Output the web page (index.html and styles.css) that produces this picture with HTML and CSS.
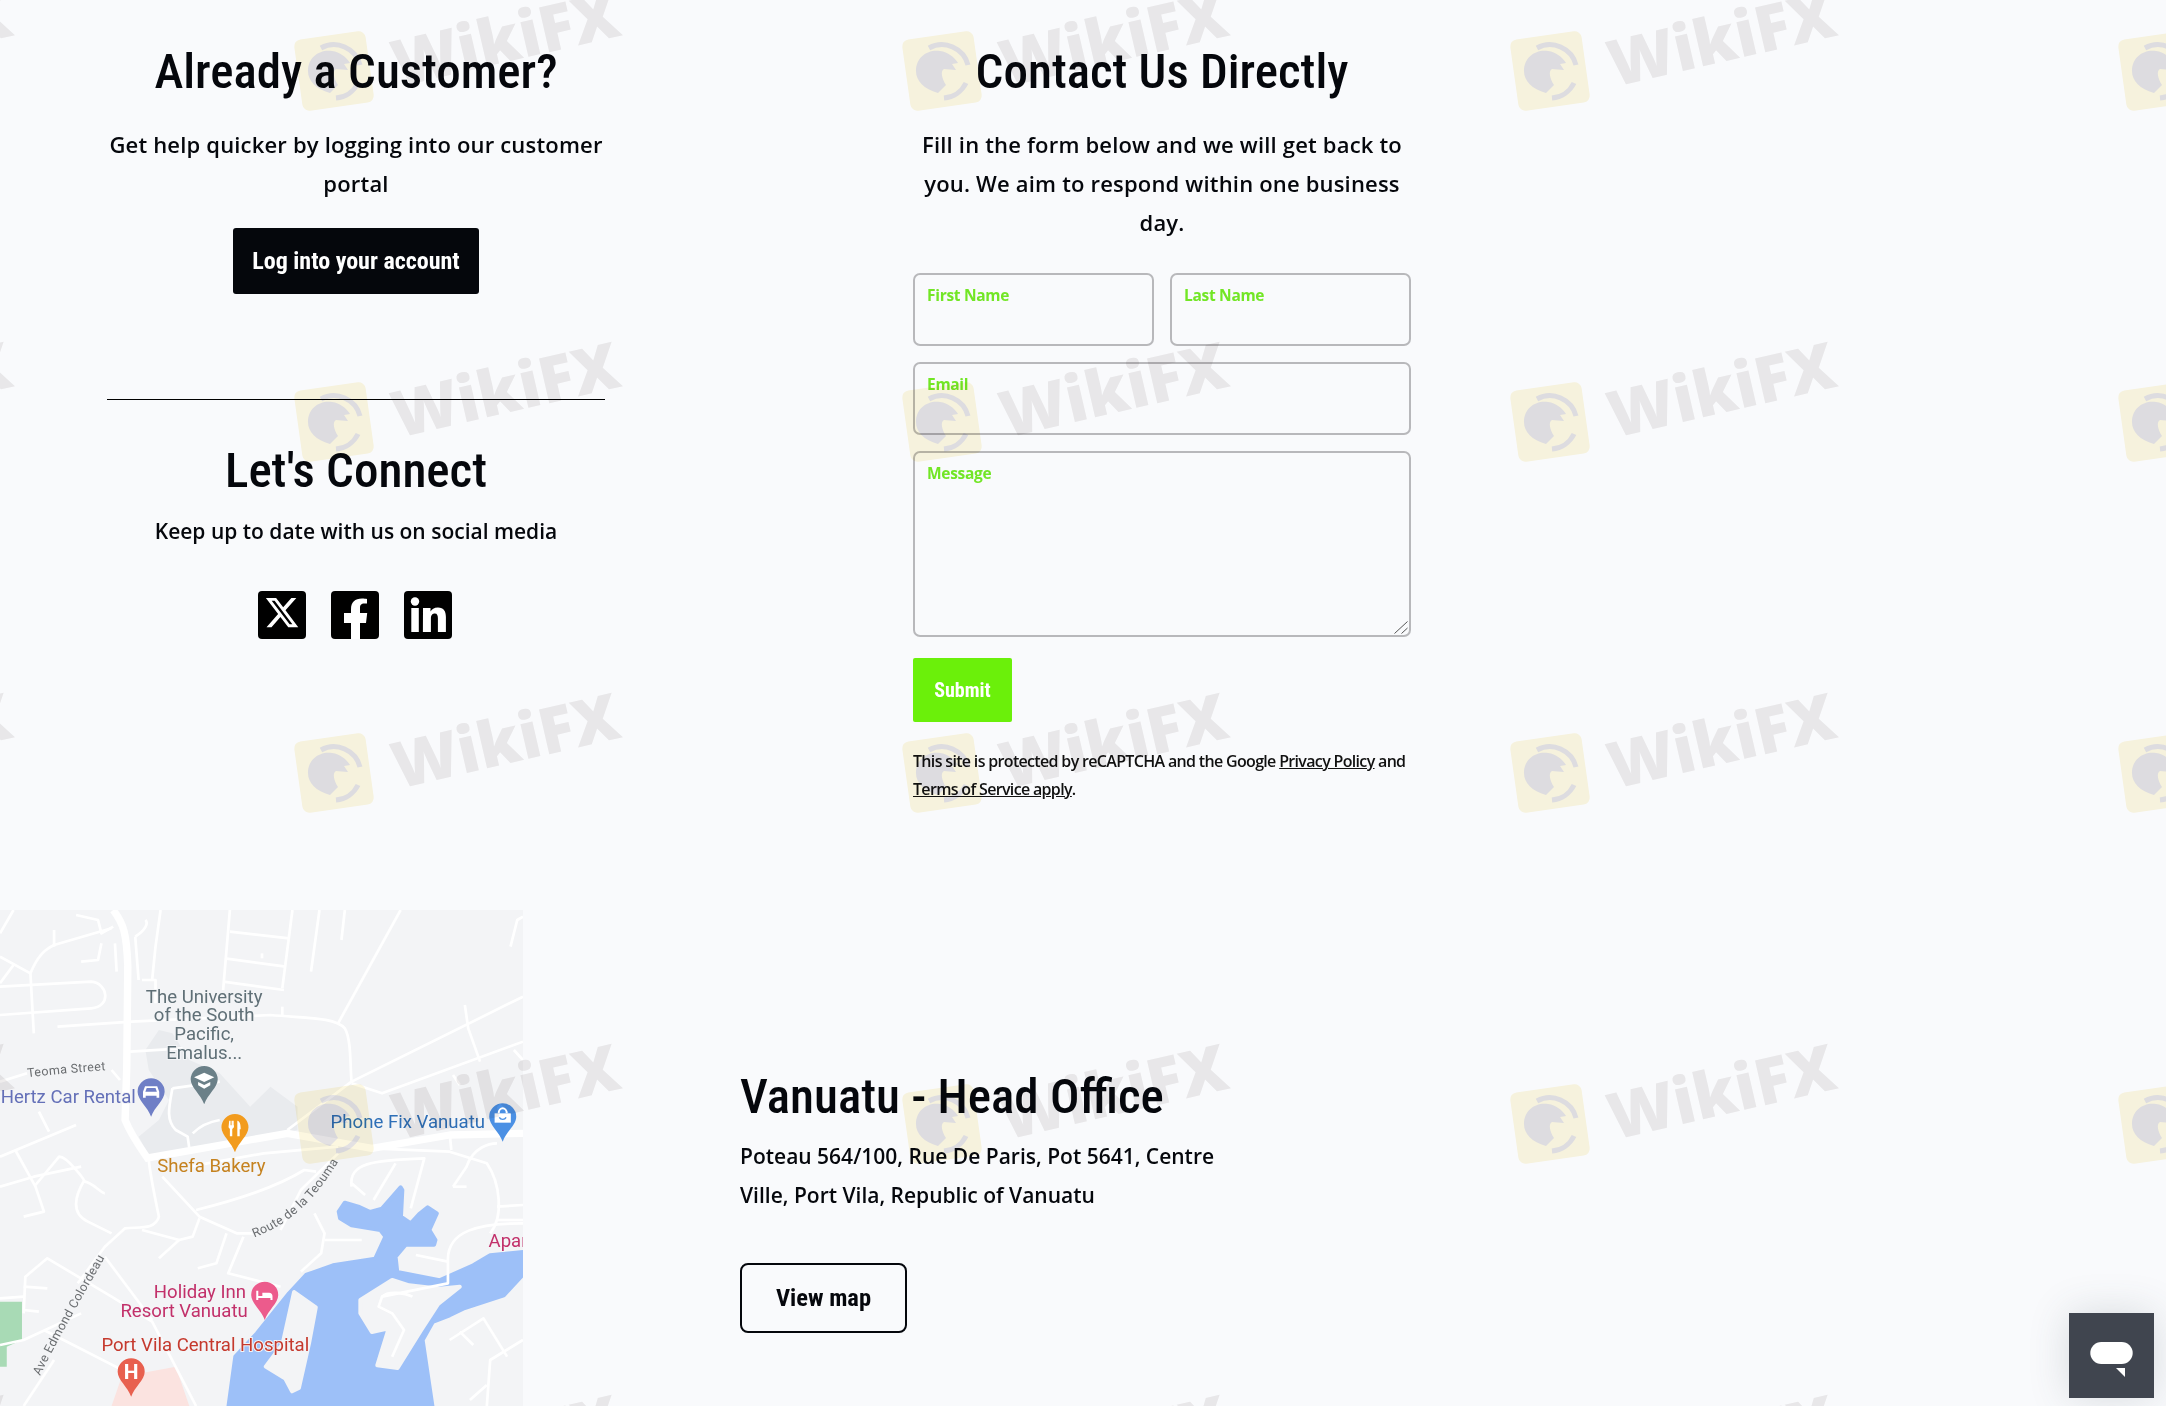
FILE: index.html
```html
<!DOCTYPE html>
<html lang="en">
<head>
    <meta charset="UTF-8">
    <meta name="viewport" content="width=device-width, initial-scale=1.0">
    <title>Contact Us</title>
    <link rel="stylesheet" href="styles.css">
</head>
<body>
    <div class="contact">
        <div class="contact-side">
            <h2>Already a Customer?</h2>
            <p class="lead">Get help quicker by logging into our customer portal</p>
            <a class="btn-login" href="#">Log into your account</a>
            <hr class="divider">
            <h2>Let's Connect</h2>
            <p class="lead-small">Keep up to date with us on social media</p>
            <div class="social">
                <a href="#" aria-label="X">
                    <svg viewBox="0 0 48 48" width="48" height="48">
                        <rect width="48" height="48" rx="4" fill="#000"/>
                        <path transform="translate(6 3.6) scale(1.5)" fill="#fff" d="M18.244 2.25h3.308l-7.227 8.26 8.502 11.24H16.17l-5.214-6.817L4.99 21.75H1.68l7.73-8.835L1.254 2.25H8.08l4.713 6.231zm-1.161 17.52h1.833L7.084 4.126H5.117z"/>
                    </svg>
                </a>
                <a href="#" aria-label="Facebook">
                    <svg viewBox="0 0 48 48" width="48" height="48">
                        <rect width="48" height="48" rx="4" fill="#000"/>
                        <path fill="#fff" d="M29 48V32h6l1.2-10H29v-5c0-3 1-4.5 4.5-4.500H36V8c-1-.2-3-.4-5-.4-7 0-11 3.600-11 10.800V22h-7v10h7v16z"/>
                    </svg>
                </a>
                <a href="#" aria-label="LinkedIn">
                    <svg viewBox="0 0 48 48" width="48" height="48">
                        <rect width="48" height="48" rx="4" fill="#000"/>
                        <circle cx="11" cy="10.500" r="4.200" fill="#fff"/>
                        <path fill="#fff" d="M7.300 17h7.500v24H7.300zM19 17h7.500v3.400c1.200-2 3.600-4 7.400-4 6 0 8 4 8 9.600V41h-8V27.500c0-3-.6-5-3-5-3 0-4 2.200-4 5V41h-8z"/>
                    </svg>
                </a>
            </div>
        </div>

        <div class="contact-main">
            <h2>Contact Us Directly</h2>
            <p class="lead lead-form">Fill in the form below and we will get back to you. We aim to respond within one business day.</p>
            <form class="form">
                <div class="form-row">
                    <div class="field">
                        <label for="first-name">First Name</label>
                        <input id="first-name" type="text">
                    </div>
                    <div class="field">
                        <label for="last-name">Last Name</label>
                        <input id="last-name" type="text">
                    </div>
                </div>
                <div class="field">
                    <label for="email">Email</label>
                    <input id="email" type="email">
                </div>
                <div class="field">
                    <label for="message">Message</label>
                    <textarea id="message"></textarea>
                    <svg class="grip" viewBox="0 0 14 13" width="14" height="13">
                        <path d="M0.500,12.500 L13.500,0.500 M7.500,12.500 L13.500,7"/>
                    </svg>
                </div>
                <button class="btn-submit" type="button">Submit</button>
            </form>
            <p class="recaptcha">This site is protected by reCAPTCHA and the Google <a href="#">Privacy Policy</a> and <a href="#">Terms of Service apply</a>.</p>
        </div>
    </div>

    <div class="office">
        <svg class="map" viewBox="0 30 1547 1488" preserveAspectRatio="none" width="523" height="496">
            <defs>
                <path id="pin" d="M-40,0 A40,40 0 1 1 40,0 C40,25 10,45 0,75 C-10,45 -40,25 -40,0Z"/>
                <path id="label-route" d="M752,1012 C840,978 925,920 1014,762"/>
                <path id="label-ave" d="M118,1428 C180,1300 250,1180 318,1058"/>
                <path id="label-teoma" d="M82,532 C160,522 240,516 322,510"/>
            </defs>
            <rect x="0" y="30" width="1547" height="1488" fill="#f3f4f6"/>
            <path fill="#e9ebee" d="M430,450 L470,390 L510,400 L560,480 L650,520 L740,620 L800,560 L880,620 L880,690 L560,760 L440,765 L410,710 L470,660 L500,600 L440,510Z"/>
            <path fill="#a8dab5" d="M0,1205 L65,1205 L65,1320 L20,1340 L20,1400 L0,1400Z"/>
            <path fill="#fbe3e0" d="M360,1430 L520,1400 L560,1518 L330,1518Z"/>
            <path class="water" d="M676,1518 L696,1370 L760,1300 L855,1180 L905,1125 L985,1096 L1110,1076 L1140,1010 L1125,990 L1040,976 L1006,955 L1002,935 L1020,908 L1060,920 L1095,936 L1130,926 L1185,862 L1190,870 L1186,950 L1215,970 L1240,942 L1265,922 L1292,940 L1270,990 L1288,1020 L1284,1034 L1200,1034 L1170,1070 L1175,1116 L1300,1141 L1400,1096 L1450,1066 L1547,1056 L1547,1124 L1490,1186 L1370,1226 L1330,1246 L1280,1266 L1250,1320 L1279,1518Z"/>
            <path class="land" d="M1160,1140 L1066,1200 L1066,1240 L1100,1296 L1150,1285 L1116,1396 L1176,1404 L1246,1290 L1296,1212 L1360,1160 L1300,1166 L1210,1156Z"/>
            <path class="land" d="M870,1176 L934,1222 L914,1330 L884,1464 L864,1474 L844,1436 L786,1400 L836,1332 L856,1240Z"/>

            <g class="roads-main">
                <path d="M335,30 C365,70 375,100 378,200 L375,500 L370,660 C390,710 420,750 440,780"/>
                <path d="M430,775 L850,700 L1100,745 L1330,705 L1547,700"/>
            </g>
            <g class="roads">
                <path d="M0,100 L40,30"/>
                <path d="M0,170 L90,220 L100,400"/>
                <path d="M0,250 L40,195"/>
                <path d="M90,220 C110,170 130,150 160,135 L330,85"/>
                <path d="M160,90 L160,140"/>
                <path d="M240,185 L290,180 L300,130"/>
                <path d="M225,45 L290,60 L300,100 L335,80"/>
                <path d="M340,130 L345,215"/>
                <path d="M400,110 L410,240"/>
                <path d="M430,60 C440,70 430,90 400,110"/>
                <path d="M475,30 L460,140 L450,240"/>
                <path d="M0,260 L270,245 C320,250 330,320 270,325 L0,345"/>
                <path d="M170,380 L390,365 L800,345 C900,355 990,350 1020,385 C1040,420 1035,500 1040,545"/>
                <path d="M420,240 L460,240 L460,310"/>
                <path d="M385,455 L540,445"/>
                <path d="M1000,370 L1185,30"/>
                <path d="M680,30 L660,270"/>
                <path d="M680,95 L855,115"/>
                <path d="M665,175 L845,200"/>
                <path d="M660,245 L840,270"/>
                <path d="M865,30 L835,265"/>
                <path d="M775,160 L775,175"/>
                <path d="M945,30 L920,215"/>
                <path d="M1020,30 L1010,120"/>
                <path d="M835,320 L835,350"/>
                <path d="M850,690 L1040,545 L1547,290"/>
                <path d="M1040,550 L1130,580 L1547,425"/>
                <path d="M1375,315 L1385,385 L1420,485"/>
                <path d="M1340,525 L1360,555"/>
                <path d="M1510,140 L1530,60 L1547,50"/>
                <path d="M1520,450 L1547,480"/>
                <path d="M510,565 L650,545"/>
                <path d="M510,565 C500,620 490,660 520,690 L555,710 L560,745"/>
                <path d="M570,700 C590,680 620,665 650,660"/>
                <path d="M0,545 L80,520"/>
                <path d="M330,510 L355,540"/>
                <path d="M0,770 L225,675"/>
                <path d="M115,635 L145,695"/>
                <path d="M45,750 L105,860 L130,935 L70,950"/>
                <path d="M0,860 L100,830 L240,800"/>
                <path d="M105,855 L175,770 C200,770 250,840 250,845 C270,845 300,880 310,880"/>
                <path d="M250,840 C220,890 210,940 260,965 L330,1000"/>
                <path d="M440,780 C445,830 460,900 470,950 C460,990 410,980 370,985 L310,1040 L230,1150"/>
                <path d="M480,830 L590,950 L700,1000 L770,1000"/>
                <path d="M580,930 C700,900 820,860 900,810 L935,815"/>
                <path d="M560,800 L780,760 L1000,740"/>
                <path d="M1000,760 L890,870 L830,990"/>
                <path d="M590,955 L570,1010 L530,1020 L470,1075"/>
                <path d="M420,990 L530,1020"/>
                <path d="M670,1000 L640,1090 L585,1105"/>
                <path d="M720,1010 L675,1120 L830,1160"/>
                <path d="M930,940 L960,1000 L950,1060 L890,1115"/>
                <path d="M960,1020 L1070,1020"/>
                <path d="M1330,700 L1335,750"/>
                <path d="M1100,745 L1330,755 L1440,790 C1480,850 1490,950 1450,1000"/>
                <path d="M1040,860 C1030,790 1100,780 1255,775 L1215,925"/>
                <path d="M1170,790 L1105,900"/>
                <path d="M1040,850 L1080,885"/>
                <path d="M1340,860 L1380,800 C1400,740 1450,730 1470,730"/>
                <path d="M1340,860 L1380,860"/>
                <path d="M1470,920 L1547,915"/>
                <path d="M1470,960 L1547,960"/>
                <path d="M1230,1065 L1325,1085 C1320,990 1420,970 1547,970"/>
                <path d="M1325,1085 L1325,1150 L1130,1190 L1120,1220 L1160,1240 L1195,1290 L1160,1370"/>
                <path d="M1130,1190 C1150,1170 1200,1180 1220,1190"/>
                <path d="M70,1190 L0,1195"/>
                <path d="M70,1240 L75,1130 L140,1075 L330,1190 L450,1265 L580,1518"/>
                <path d="M70,1160 L140,1165"/>
                <path d="M70,1230 L115,1235"/>
                <path d="M310,1070 L450,1260"/>
                <path d="M130,1290 L400,1430"/>
                <path d="M0,1335 L70,1320 L240,1240"/>
                <path d="M70,1518 L160,1380"/>
                <path d="M1330,1320 L1430,1255 L1500,1370"/>
                <path d="M1360,1295 L1400,1335"/>
                <path d="M1547,1320 L1450,1380 L1440,1518"/>
                <path d="M1390,1500 L1440,1455"/>
            </g>

            <use href="#pin" x="447" y="575" fill="#6f7fc6"/>
            <path fill="#fff" d="M423,575 l6,-16 h36 l6,16 v18 h-8 v-6 h-32 v6 h-8z M430,575 h34 l-4,-11 h-26z" fill-rule="evenodd"/>
            <use href="#pin" x="604" y="538" fill="#6b8088"/>
            <path fill="#fff" d="M574,532 L604,518 L634,532 L604,546Z M586,546 L604,555 L622,546 V556 L604,566 L586,556Z"/>
            <use href="#pin" x="695" y="682" fill="#f29b1d"/>
            <path fill="#fff" d="M678,662 h4 v14 h3 v-14 h4 v14 h1 v-14 h2 v20 l-5,5 v22 h-7 v-22 l-4,-5z M702,662 c8,2 10,12 10,26 h-3 v21 h-7z"/>
            <use href="#pin" x="1487" y="650" fill="#4b90e4"/>
            <path fill="#fff" d="M1463,640 h48 v28 h-48z"/>
            <path fill="none" stroke="#fff" stroke-width="6" d="M1475,640 c0,-20 24,-20 24,0"/>
            <path fill="none" stroke="#4b90e4" stroke-width="4" d="M1477,652 c4,8 16,8 20,0"/>
            <use href="#pin" x="783" y="1185" fill="#ec5b8c"/>
            <path fill="#fff" d="M758,1172 h6 v16 h12 v-10 h20 c6,0 10,4 10,10 v12 h-6 v-6 h-36 v6 h-6z"/>
            <use href="#pin" x="388" y="1415" fill="#e8604f"/>
            <text class="pin-letter" x="388" y="1438">H</text>

            <g class="map-labels">
                <text class="label-school" text-anchor="middle" x="604" y="308">The University</text>
                <text class="label-school" text-anchor="middle" x="604" y="363">of the South</text>
                <text class="label-school" text-anchor="middle" x="604" y="420">Pacific,</text>
                <text class="label-school" text-anchor="middle" x="604" y="477">Emalus...</text>
                <text class="label-street"><textPath href="#label-teoma">Teoma Street</textPath></text>
                <text class="label-street"><textPath href="#label-route">Route de la Teouma</textPath></text>
                <text class="label-street"><textPath href="#label-ave">Ave Edmond Colordeau</textPath></text>
                <text class="label-car" x="2" y="610">Hertz Car Rental</text>
                <text class="label-food" x="465" y="817">Shefa Bakery</text>
                <text class="label-shop" x="978" y="685">Phone Fix Vanuatu</text>
                <text class="label-hotel" text-anchor="end" x="728" y="1195">Holiday Inn</text>
                <text class="label-hotel" text-anchor="end" x="733" y="1250">Resort Vanuatu</text>
                <text class="label-hospital" x="300" y="1352">Port Vila Central Hospital</text>
                <text class="label-hotel" x="1445" y="1040">Apar</text>
            </g>
        </svg>
        <div class="office-info">
            <h2>Vanuatu - Head Office</h2>
            <p class="address">Poteau 564/100, Rue De Paris, Pot 5641, Centre Ville, Port Vila, Republic of Vanuatu</p>
            <a class="btn-map" href="#">View map</a>
        </div>
    </div>

    <!-- repeating site watermark -->
    <svg class="watermark" width="2166" height="1406">
        <defs>
            <pattern id="wm" x="284" y="-29" width="608" height="351" patternUnits="userSpaceOnUse">
                <rect x="14" y="64" width="72" height="72" rx="7" fill="#fcf7e0" transform="rotate(-8 50 100)"/>
                <path fill="none" stroke="#e3e1e3" stroke-width="5" d="M37,77 A27,27 0 0 1 76,94 M74,112 A27,27 0 0 1 52,127"/>
                <path fill="#e3e1e3" d="M24,100 C24,86 36,78 48,80 C56,81 62,86 66,92 L60,93 L64,99 L52,98 C48,100 50,108 54,114 L46,122 C32,118 24,110 24,100Z"/>
                <text class="wm-text" x="114" y="116" transform="rotate(-13 114 116)">WikiFX</text>
            </pattern>
        </defs>
        <rect width="2166" height="1406" fill="url(#wm)"/>
    </svg>

    <button class="chat" type="button" aria-label="Chat">
        <svg viewBox="0 0 85 85" width="85" height="85">
            <rect x="21.300" y="29" width="42.400" height="22" rx="11" fill="#fff"/>
            <polygon points="47,55 56,55 56,64" fill="#fff"/>
        </svg>
    </button>
</body>
</html>
```

FILE: styles.css
```css
/* General Styles */
html, body {
    margin: 0;
    padding: 0;
}

body {
    position: relative;
    width: 2166px;
    height: 1406px;
    overflow: hidden;
    background: #f9fafc;
    color: #05070c;
    font-family: 'Open Sans', sans-serif;
}

h2 {
    margin: 0;
    font-family: Roboto, sans-serif;
    font-size: 49px;
    font-stretch: 75%;
    font-weight: 500;
    line-height: 60px;
}

p {
    margin: 0;
}

/* Top section */
.contact {
    display: grid;
    grid-template-columns: 498px 498px;
    column-gap: 308px;
    padding: 42px 0 107px 107px;
}

.contact-side,
.contact-main {
    text-align: center;
}

.lead {
    margin-top: 23px;
    font-size: 22px;
    font-weight: 600;
    line-height: 39px;
    letter-spacing: 0.18px;
}

.lead-small {
    margin-top: 11px;
    font-size: 21px;
    font-weight: 600;
    line-height: 39px;
}

.btn-login {
    display: block;
    width: 246px;
    height: 66px;
    margin: 25px auto 0;
    border-radius: 3px;
    background: #05070c;
    color: #fff;
    font-family: Roboto, sans-serif;
    font-size: 24px;
    font-stretch: 75%;
    font-weight: 700;
    line-height: 66px;
    text-decoration: none;
}

.divider {
    height: 1px;
    margin: 105px 0 41px;
    border: 0;
    background: #000;
}

.social {
    display: flex;
    justify-content: center;
    gap: 25px;
    margin-top: 40px;
    padding-right: 2px;
}

.social a,
.social svg {
    display: block;
}

/* Form */
.form {
    display: flex;
    flex-direction: column;
    gap: 16px;
    margin-top: 31px;
    text-align: left;
}

.form-row {
    display: flex;
    gap: 16px;
}

.form-row .field {
    flex: 1;
}

.field {
    position: relative;
}

.field label {
    position: absolute;
    top: 12px;
    left: 14px;
    color: #72e625;
    font-size: 15.500px;
    font-weight: 700;
    line-height: 20px;
    letter-spacing: -0.3px;
}

.field input,
.field textarea {
    display: block;
    box-sizing: border-box;
    width: 100%;
    border: 2px solid #b8b8bb;
    border-radius: 7px;
    background: transparent;
    outline: 0;
}

.field input {
    height: 73px;
}

.field textarea {
    height: 186px;
    resize: none;
}

.grip {
    position: absolute;
    right: 3px;
    bottom: 3px;
    fill: none;
    stroke: #555;
    stroke-width: 1;
}

.btn-submit {
    align-self: flex-start;
    width: 99px;
    height: 64px;
    margin-top: 5px;
    padding: 0;
    border: 0;
    border-radius: 2px;
    background: #6bf00a;
    color: #fff;
    font-family: Roboto, sans-serif;
    font-size: 20px;
    font-stretch: 75%;
    font-weight: 700;
}

.recaptcha {
    margin-top: 25px;
    font-size: 16px;
    font-weight: 600;
    line-height: 28px;
    letter-spacing: -0.67px;
    text-align: left;
    color: #111;
}

.recaptcha a {
    color: inherit;
}

/* Office */
.office {
    display: flex;
    height: 496px;
}

.map {
    display: block;
    flex: none;
}

.water {
    fill: #9dc0f8;
    stroke: #9dc0f8;
    stroke-width: 12;
    stroke-linejoin: round;
}

.land {
    fill: #f3f4f6;
    stroke: #f3f4f6;
    stroke-width: 12;
    stroke-linejoin: round;
}

.roads,
.roads-main {
    fill: none;
    stroke: #fff;
    stroke-linejoin: round;
}

.roads {
    stroke-width: 8;
}

.roads-main {
    stroke-width: 22;
}

.map-labels text {
    font-family: Roboto, sans-serif;
    font-size: 55px;
    paint-order: stroke;
    stroke: #f3f4f6;
    stroke-width: 6px;
}

.map-labels .label-street {
    font-size: 37px;
    fill: #6a6d70;
    letter-spacing: 1px;
}

.map-labels .label-school { fill: #5f6f76; }
.map-labels .label-car { fill: #6470b8; }
.map-labels .label-food { fill: #c5821f; }
.map-labels .label-shop { fill: #2e6fb7; }
.map-labels .label-hotel { fill: #c2306a; }
.map-labels .label-hospital { fill: #c5392d; }

.pin-letter {
    fill: #fff;
    font-family: Roboto, sans-serif;
    font-size: 62px;
    font-weight: 700;
    text-anchor: middle;
}

.office-info {
    margin-left: 217px;
    padding-top: 157px;
}

.address {
    width: 500px;
    margin-top: 10px;
    font-size: 21px;
    font-weight: 600;
    line-height: 39px;
}

.btn-map {
    display: block;
    box-sizing: border-box;
    width: 167px;
    height: 70px;
    margin-top: 48px;
    border: 2px solid #05070c;
    border-radius: 8px;
    color: #05070c;
    font-family: Roboto, sans-serif;
    font-size: 24.500px;
    font-stretch: 75%;
    font-weight: 700;
    line-height: 66px;
    text-align: center;
    text-decoration: none;
}

/* Overlays */
.watermark {
    position: absolute;
    top: 0;
    left: 0;
    mix-blend-mode: multiply;
    pointer-events: none;
}

.wm-text {
    fill: #eeecec;
    font-family: 'Open Sans', sans-serif;
    font-size: 64px;
    font-weight: 800;
}

.chat {
    position: absolute;
    right: 12px;
    bottom: 8px;
    width: 85px;
    height: 85px;
    padding: 0;
    border: 0;
    background: #40454f;
    box-shadow: 0 0 40px rgba(60, 80, 90, 0.18);
}

.chat svg {
    display: block;
}
```
